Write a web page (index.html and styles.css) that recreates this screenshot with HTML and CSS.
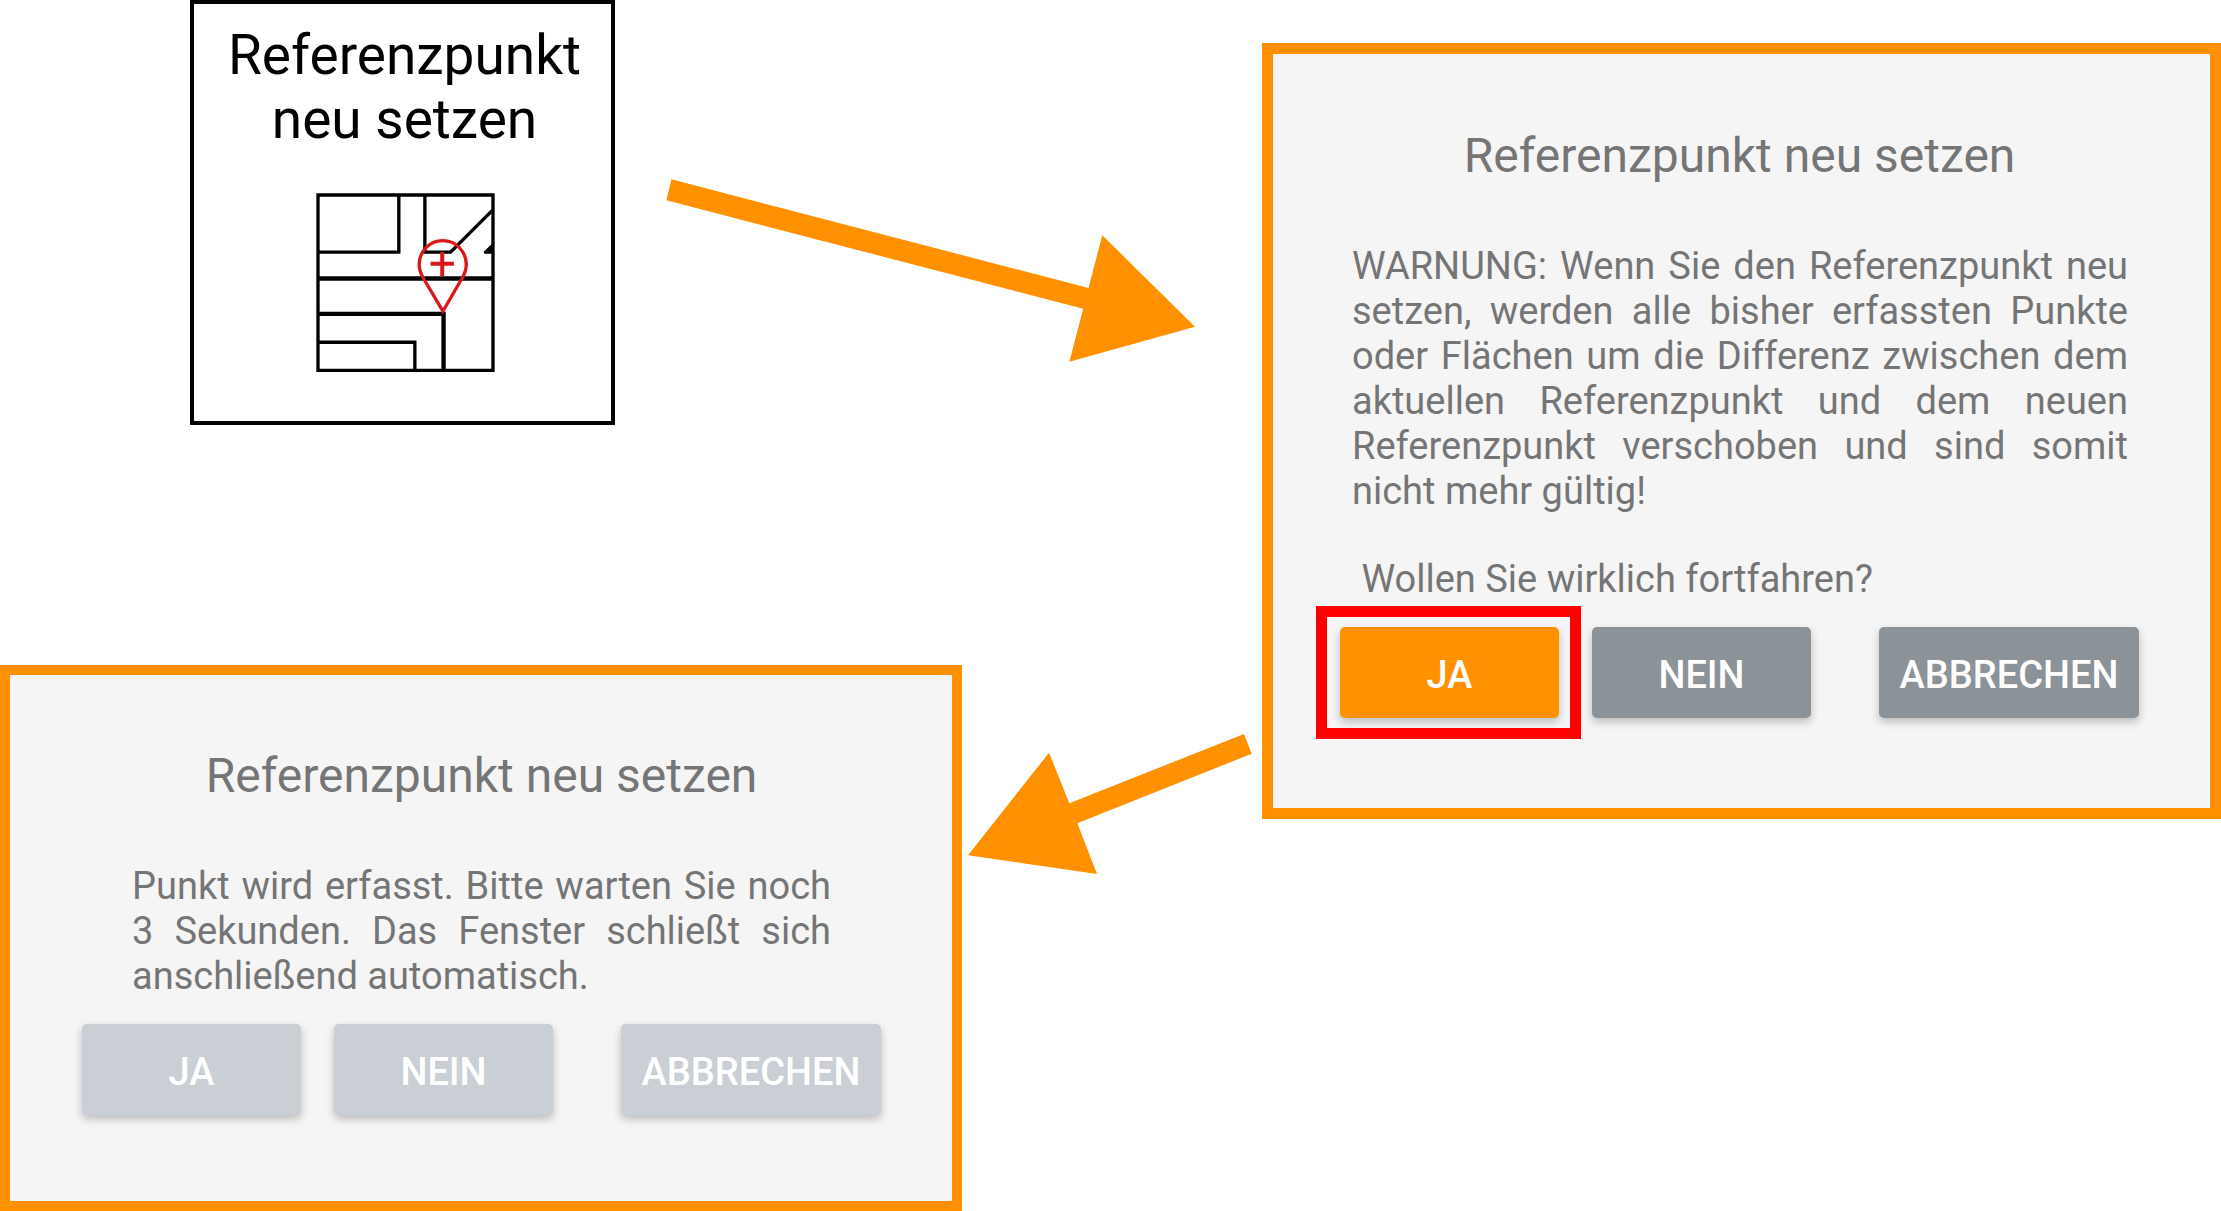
FILE: index.html
```html
<!DOCTYPE html>
<html lang="de">
<head>
<meta charset="utf-8">
<meta name="viewport" content="width=device-width, initial-scale=1">
<title>Referenzpunkt neu setzen</title>
<link rel="stylesheet" href="styles.css">
</head>
<body>
<main class="flow">
  <div class="start">
    <button class="tile" type="button">
      <span class="tile-label">Referenzpunkt<br>neu setzen</span>
      <svg class="map" viewBox="34 24 536 536" aria-hidden="true">
        <g fill="none" stroke="#000" stroke-width="10">
          <path d="M40 30H564V555H40Z"/>
          <path d="M40 201H282V30M360 30V201H437L562 76"/>
          <path d="M40 280H564" stroke-width="13"/>
          <path d="M40 386H416V555" stroke-width="13"/>
          <path d="M40 471H330V555"/>
        </g>
        <path d="M536 200L562 175V206H538Z"/>
        <g fill="none" stroke="#d8181b" stroke-width="10">
          <path d="M414 378L356 280C346 263 343 250 343 238A70 71 0 0 1 484 238C484 250 481 263 471 280Z"/>
          <path d="M412 201V273M377 236H447" stroke-width="12"/>
        </g>
      </svg>
    </button>
    <section class="dialog dialog-progress" aria-labelledby="progress-title">
      <h2 class="title" id="progress-title">Referenzpunkt neu setzen</h2>
      <p class="message">Punkt wird erfasst. Bitte warten Sie noch 3 Sekunden. Das Fenster schließt sich anschließend automatisch.</p>
      <div class="actions">
        <button class="action" type="button" disabled>JA</button>
        <button class="action" type="button" disabled>NEIN</button>
        <button class="action action-cancel" type="button" disabled>ABBRECHEN</button>
      </div>
    </section>
  </div>
  <section class="dialog dialog-warning" aria-labelledby="warning-title">
    <h2 class="title" id="warning-title">Referenzpunkt neu setzen</h2>
    <p class="message">WARNUNG: Wenn Sie den Referenzpunkt neu setzen, werden alle bisher erfassten Punkte oder Flächen um die Differenz zwischen dem aktuellen Referenzpunkt und dem neuen Referenzpunkt verschoben und sind somit nicht mehr gültig!</p>
    <p class="message question">&nbsp;Wollen Sie wirklich fortfahren?</p>
    <div class="actions">
      <button class="action action-primary" type="button">JA</button>
      <button class="action" type="button">NEIN</button>
      <button class="action action-cancel" type="button">ABBRECHEN</button>
    </div>
  </section>
  <svg class="arrows" viewBox="0 0 2221 1211" preserveAspectRatio="none" aria-hidden="true">
    <path d="M671.4 179.3L1088.5 288L1102.3 235.3L1195 326.7L1069.4 361.7L1083.2 308.7L666.4 200.3Z"/>
    <path d="M1244 734L1251.7 753.7L1077.3 823.3L1097 874L968 855.3L1049 752.7L1069.3 803.3Z"/>
  </svg>
</main>
</body>
</html>
```
FILE: styles.css
```css
* {
  box-sizing: border-box;
}

body {
  margin: 0;
  background: #fff;
  font-family: Roboto, "Liberation Sans", sans-serif;
}

.flow {
  position: relative;
  display: grid;
  grid-template-columns: 962fr 959fr;
  column-gap: 300px;
  align-items: start;
  min-height: 100vh;
}

.start {
  display: flex;
  flex-direction: column;
  justify-content: space-between;
  align-self: stretch;
  gap: 48px;
}

.tile {
  display: flex;
  flex-direction: column;
  align-items: center;
  align-self: flex-start;
  gap: 42px;
  width: 425px;
  margin-left: 190px;
  padding: 19px 0 49px 4px;
  border: 4px solid #000;
  background: #fff;
  color: #000;
  font: inherit;
}

.tile-label {
  font-size: 55px;
  line-height: 64px;
}

.map {
  display: block;
  width: 179px;
  height: 179px;
  margin-left: 2px;
}

.dialog {
  border: 10px solid #ff9100;
  background: #f5f5f5;
  color: #757575;
}

.dialog-progress {
  padding: 73px 71px 86px 72px;
}

.dialog-warning {
  margin-top: 43px;
  padding: 74px 71px 90px 67px;
  border-width: 11px;
}

.title {
  margin: 0 0 60px;
  font-size: 48px;
  font-weight: 400;
  line-height: 56px;
  text-align: center;
}

.message {
  margin: 0 11px 0 12px;
  font-size: 38px;
  line-height: 45px;
  text-align: justify;
}

.dialog-progress .message {
  margin: 0 50px;
}

.message.question {
  margin-top: 43px;
}

.actions {
  display: flex;
  gap: 33px;
  margin-top: 25px;
}

.action {
  position: relative;
  width: 219px;
  height: 91px;
  padding: 5px 0 0;
  border: 0;
  border-radius: 5px;
  background: #8b9298;
  box-shadow: 0 4px 8px rgba(0, 0, 0, 0.24);
  color: #fff;
  font: 500 38px/45px Roboto, "Liberation Sans", sans-serif;
}

.action:disabled {
  background: #c9cfd5;
}

.action-primary {
  background: #ff9100;
}

/* Red marker around the button to press */
.action-primary::after {
  content: "";
  position: absolute;
  inset: -21px -22px -21px -24px;
  border: 11px solid #f00;
}

.action-cancel {
  width: 260px;
  margin-left: auto;
}

.arrows {
  position: absolute;
  inset: 0;
  width: 100%;
  height: 100%;
  fill: #ff9100;
  pointer-events: none;
}
```
